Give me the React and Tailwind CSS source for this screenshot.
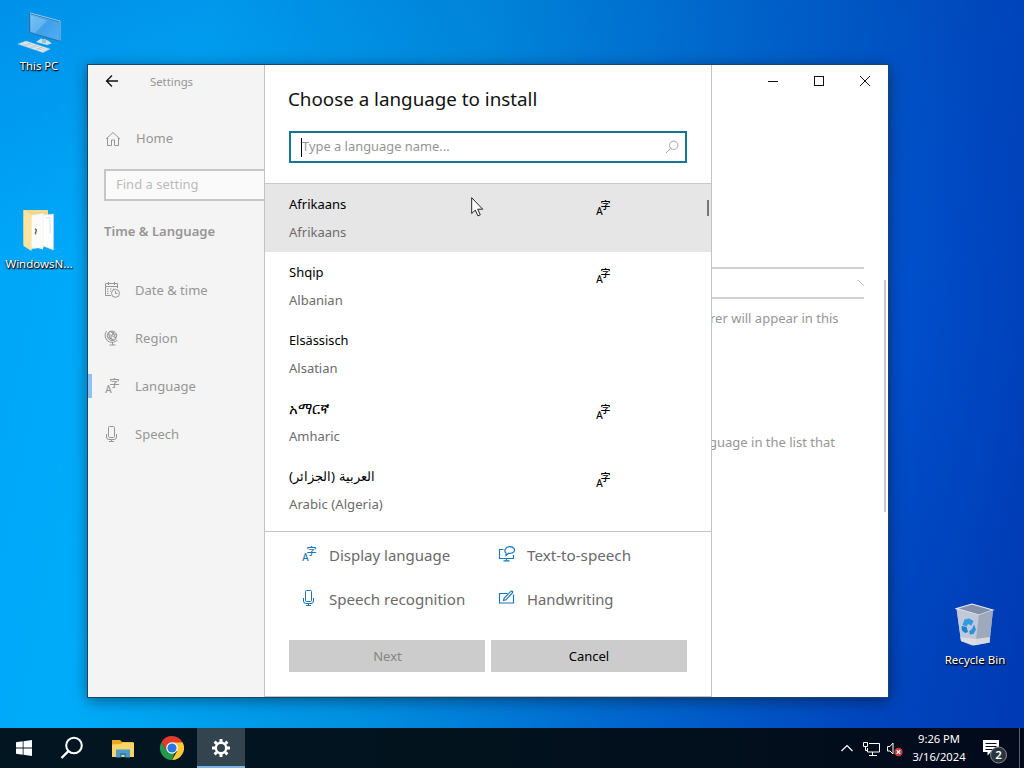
import React from "react";

const languages = [
  { native: "Afrikaans", english: "Afrikaans", display: true, cls: "text-[13px]", sub: "text-[13px]" },
  { native: "Shqip", english: "Albanian", display: true, cls: "text-[13px]", sub: "text-[13px]" },
  { native: "Elsässisch", english: "Alsatian", display: false, cls: "text-[12.800px]", sub: "text-[13px]" },
  { native: "አማርኛ", english: "Amharic", display: true, cls: "text-[14.500px]", sub: "text-[13px]" },
  { native: "العربية (الجزائر)", english: "Arabic (Algeria)", display: true, cls: "text-[13.400px]", sub: "text-[13.200px]" },
];

function LanguageIcon({ className }) {
  return (
    <svg viewBox="0 0 16 16" className={"h-4 w-4 shrink-0 overflow-visible " + className} fill="currentColor">
      <text x="1.2" y="14.8" fontSize="10" fontFamily="Noto Sans" stroke="currentColor" strokeWidth="0.15">A</text>
      <text x="5.400" y="9" fontSize="10" fontFamily="Noto Sans CJK SC" fontWeight="500">字</text>
    </svg>
  );
}

function MicIcon({ className }) {
  return (
    <svg viewBox="0 0 16 18" className={"h-[18px] w-4 shrink-0 " + className} fill="none" stroke="currentColor">
      <rect x="5.500" y="1.500" width="6" height="11" rx="1" />
      <path d="M3.500 9v3q0 2.500 2.500 2.500h5q2.500 0 2.500-2.500V9M8.500 14.500v2M6 16.500h5" />
    </svg>
  );
}

function HomeIcon() {
  return (
    <svg viewBox="0 0 16 16" className="-mt-px h-4 w-4 shrink-0" fill="none" stroke="currentColor">
      <path d="M1 8 8 1.500 15 8M2.500 7v7.500h4V9h3v5.500h4V7" />
    </svg>
  );
}

function CalendarIcon() {
  return (
    <svg viewBox="0 0 16 16" className="-mt-[3px] h-4 w-4 shrink-0" fill="none" stroke="currentColor">
      <path d="M7 13.500H1.500v-12h12V6M1.500 4.500h12M4.500 0v3M10.500 0v3" />
      <path d="M3 7h1.500M6 7h1.500M9 7h1M3 9.200h1.500M6 9.200h1M3 11.400h1.500" />
      <circle cx="11.500" cy="11.300" r="4" />
      <path d="M11.500 9v2.500h2" />
    </svg>
  );
}

function GlobeIcon() {
  return (
    <svg viewBox="0 0 16 16" className="-mt-[3px] h-4 w-4 shrink-0" fill="none" stroke="currentColor">
      <circle cx="8" cy="5.800" r="4.700" />
      <ellipse cx="8" cy="5.800" rx="2.300" ry="4.700" transform="rotate(-35 8 5.800)" />
      <path d="M4 3.300 12 8.300M5.500 9.500 10 1.800M3.300 6.500l6 3.700M6.500 1.500l6 3.800" strokeWidth=".9" />
      <path d="M2.700 1C.800 3.200.600 6.500 2.100 9c2 3.500 6.500 4.800 11.400 1.200M8.500 12v3M5.500 15h6" />
    </svg>
  );
}

function TextToSpeechIcon() {
  return (
    <svg viewBox="0 0 18 16" className="h-4 w-[18px] shrink-0" fill="none" stroke="currentColor" strokeWidth="1.150">
      <path d="M5.500 3.500h-4v9h14V9M8.500 12.500v2.500M5.500 14.900h6" />
      <path d="M8 9.500V7.200C5.500 4.800 7.500.600 11.700.600s6.300 3.600 3.600 5.700c-1.300 1-3.300 1.100-4.600.900z" />
    </svg>
  );
}

function HandwritingIcon() {
  return (
    <svg viewBox="0 0 18 16" className="-mt-px h-4 w-[18px] shrink-0" fill="none" stroke="currentColor" strokeWidth="1.150">
      <path d="M9.500 3.500h-8v9.500h14V4.500" />
      <path d="M5.500 10.500 6.200 8 13 1.200q1.800-.5 1.700 1.300L8 9.800z" />
    </svg>
  );
}

function ThisPcIcon() {
  return (
    <svg viewBox="0 0 44 44" className="h-11 w-11 translate-y-px" aria-hidden="true">
      <defs>
        <linearGradient id="screen" x1="0" y1="0" x2="1" y2="1">
          <stop offset="0" stopColor="#69baf2" />
          <stop offset=".5" stopColor="#3ea0ec" />
          <stop offset="1" stopColor="#52b1f5" />
        </linearGradient>
      </defs>
      <path d="M19 30l11 3 5-1.500-4-3-7-2z" fill="#cfe0ec" />
      <path d="M25 27h4v4h-4z" fill="#a4bfd0" />
      <path d="M12.500 1.500 42.500 9.500V29L12.500 20.500z" fill="url(#screen)" stroke="#2f6a98" strokeWidth=".9" />
      <path d="M13 .900 43 9v19.500" fill="none" stroke="#b9d9ed" strokeWidth=".8" />
      <path d="M14 3.500 30 8.500 18 21l-4-1z" fill="#9bd2f7" opacity=".35" />
      <path d="M1 32 9 29l24 8-7 3.500z" fill="#e5edf2" stroke="#a6c4d6" strokeWidth=".5" />
      <path d="M5 31.500 28 39M8 30.500l23 7.500M7 34l7-3M13 36l7-3M19 38l7-3" stroke="#9cb2bf" strokeWidth=".5" />
    </svg>
  );
}

function FolderIcon() {
  return (
    <svg viewBox="0 0 34 44" className="h-11 w-[34px]" aria-hidden="true">
      <path d="M1.500 1H26v36H9l-7.500-2z" fill="#f4d785" />
      <path d="M9 6 22 4v34l-13 2z" fill="#f6f6f4" stroke="#d7d7d7" strokeWidth=".5" />
      <path d="M21 6 31.500 5v36L21 37z" fill="#fff" stroke="#dadada" strokeWidth=".5" />
      <path d="M9.500 8 21 5.500v35L9.500 37z" fill="#fbfbfa" />
      <path d="M24 9l4-.5v16" fill="none" stroke="#d8dde1" />
      <path d="M1.500 1 9.500 6v36l-8-5z" fill="#fbe3a0" />
      <path d="M13 20q2 .5 1 2.500t0 2.500" fill="none" stroke="#666" strokeWidth="1.500" />
    </svg>
  );
}

function RecycleIcon() {
  return (
    <svg viewBox="0 0 40 44" className="h-11 w-10" aria-hidden="true">
      <path d="M1.500 6.500 17 2l21 6-3.500 32.500L17 43.500 6 39z" fill="#b5bfd1" />
      <path d="M1.500 6.500 17 2l21 6-14 5z" fill="#8490a8" stroke="#e6edf4" strokeWidth="1.100" />
      <path d="M1.500 7 24 13l-3.500 30L6 39z" fill="#bfc9da" />
      <path d="M24 13 38 8l-3.500 32.500L20.500 43z" fill="#9ea9bd" />
      <path d="M5.500 35 20 37l15-2-.5 5.500L19 43.500 6 39z" fill="#e4e4e6" opacity=".8" />
      <path d="M9.500 17.500 14 16.500 18.500 19l-2 4.500-3.500-1.500-1.500 2.500-4-1.500z" fill="#2f9be0" />
      <path d="M6.500 24l5 1 1.500 5-3 1-3-2.500z" fill="#1a83cf" />
      <path d="M19 22.500l2 5-2.500 4.500-3.500.5-1-3 3-2.500z" fill="#2a93dc" />
    </svg>
  );
}

function DesktopItem({ place, icon, label, width }) {
  return (
    <div className={"absolute flex flex-col items-center " + place}>
      {icon}
      <span className={"mt-[3px] whitespace-nowrap text-center leading-4 text-white [text-shadow:0_1px_2px_#000,1px_1px_1px_#000] " + width}>{label}</span>
    </div>
  );
}

function NavItem({ icon, label, active }) {
  return (
    <div className="relative flex h-12 items-center pl-4 text-[#969696]">
      {active && <span className="absolute left-0 top-[11px] h-6 w-[4px] bg-[#8dc0f3]" />}
      {icon}
      <span className="ml-[15px] text-[13px]">{label}</span>
    </div>
  );
}

function Sidebar() {
  return (
    <aside className="flex w-[176px] shrink-0 flex-col bg-[#f4f4f4]">
      <div className="flex h-[33px] items-center pl-[17px]">
        <svg viewBox="0 0 14 14" className="-mt-[2px] h-[14px] w-[14px]" fill="none" stroke="#111" strokeWidth="1.300">
          <path d="M13 7H1.500M7 1.500 1.500 7 7 12.500" />
        </svg>
        <span className="ml-[31px] pt-[2px] text-[11.300px] text-[#969696]">Settings</span>
      </div>
      <div className="mt-[17px] flex h-12 items-center pl-[17px] text-[#969696]">
        <HomeIcon />
        <span className="ml-[15px] text-[13px]">Home</span>
      </div>
      <div className="ml-4 mt-[6px] flex h-8 items-center border-2 border-r-0 border-[#c6c6c6] bg-[#fafafa] pl-[10px] text-[13px] text-[#bcbcbc]">
        Find a setting
      </div>
      <h2 className="ml-4 mt-5 h-5 text-[13.100px] font-semibold leading-5 text-[#969696]">Time &amp; Language</h2>
      <nav className="mt-[26px]">
        <NavItem icon={<CalendarIcon />} label="Date & time" />
        <NavItem icon={<GlobeIcon />} label="Region" />
        <NavItem icon={<LanguageIcon className="-mt-[3px]" />} label="Language" active />
        <NavItem icon={<MicIcon className="-ml-px -mt-[3px] mr-px" />} label="Speech" />
      </nav>
    </aside>
  );
}

function Dialog() {
  return (
    <section className="flex w-[448px] shrink-0 flex-col border border-t-0 border-[#c3c3c3] bg-white">
      <h1 className="ml-[23px] mt-5 h-7 whitespace-nowrap text-[18.800px] leading-7 text-[#111]">Choose a language to install</h1>
      <div className="ml-6 mt-[18px] flex h-8 w-[398px] shrink-0 items-center border-2 border-[#147794] pl-[10px] pr-[6px]">
        <span className="h-[19px] w-px bg-black" />
        <span className="grow text-[12.900px] text-[#969696]">Type a language name...</span>
        <svg viewBox="0 0 14 14" className="h-[14px] w-[14px]" fill="none" stroke="#a5a5a5">
          <circle cx="8.700" cy="5.300" r="4.200" />
          <path d="M5.600 8.400 1 13" />
        </svg>
      </div>
      <div className="relative mt-5 h-[348px] shrink-0 overflow-hidden border-t border-[#c9c9c9]">
        {languages.map((l, i) => (
          <div key={l.english} className={"flex h-[68px] pl-6 pt-[10px] " + (i === 0 ? "bg-[#e6e6e6]" : "")}>
            <div className="flex w-[306px] flex-col items-start gap-2">
              <span className={"h-5 whitespace-nowrap leading-5 text-black " + l.cls}>{l.native}</span>
              <span className={"h-5 whitespace-nowrap leading-5 text-[#6c6c6c] " + l.sub}>{l.english}</span>
            </div>
            {l.display && <LanguageIcon className="mt-[6px] text-black" />}
          </div>
        ))}
        <span className="absolute right-[2px] top-4 h-4 w-[2px] bg-[#777]" />
      </div>
      <div className="grid shrink-0 grid-cols-[197px_1fr] border-t border-[#c3c3c3] pl-9 text-[15px] text-[#6a6a6a]">
        <div className="flex h-11 items-center gap-3 text-[#1976b8]"><LanguageIcon className="-mt-px" /><span className="pt-[2px] text-[#6a6a6a]">Display language</span></div>
        <div className="flex h-11 items-center gap-[11px] text-[#1976b8]"><TextToSpeechIcon /><span className="pt-[2px] text-[15.200px] text-[#6a6a6a]">Text-to-speech</span></div>
        <div className="flex h-11 items-center gap-3 text-[#1976b8]"><MicIcon className="-ml-px mr-px" /><span className="pt-[2px] text-[15.100px] text-[#6a6a6a]">Speech recognition</span></div>
        <div className="flex h-11 items-center gap-[11px] text-[#1976b8]"><HandwritingIcon /><span className="pt-[2px] text-[14.800px] text-[#6a6a6a]">Handwriting</span></div>
      </div>
      <div className="ml-6 mt-5 flex gap-[6px] text-[13px]">
        <button className="h-8 w-[196px] bg-[#ccc] pl-px pt-px text-[#858585]">Next</button>
        <button className="h-8 w-[196px] bg-[#ccc] pt-px text-black">Cancel</button>
      </div>
    </section>
  );
}

function MainPane() {
  return (
    <main className="flex min-w-0 grow flex-col overflow-hidden bg-white">
      <div className="ml-[38px] flex h-[31px] items-end">
        <svg viewBox="0 0 138 30" className="h-[30px] w-[138px]" fill="none" stroke="#111">
          <path d="M18 15.500h10" />
          <rect x="64.500" y="10.500" width="9" height="9" />
          <path d="m110 10 10 10M120 10l-10 10" />
        </svg>
      </div>
      <div className="flex">
        <div className="w-[152px] pt-[171px]">
          <div className="flex h-8 items-center justify-end border-y-2 border-[#d2d2d2]">
            <svg viewBox="0 0 6 6" className="h-[6px] w-[6px]" fill="none" stroke="#bbb"><path d="m0 0 6 6" /></svg>
          </div>
          <p className="-ml-[2px] mt-[9px] h-5 whitespace-nowrap text-[13px] leading-5 text-[#969696]">rer will appear in this</p>
          <p className="-ml-[3px] mt-[104px] h-5 whitespace-nowrap text-[13px] leading-5 text-[#969696]">guage in the list that</p>
        </div>
        <span className="ml-5 mt-[184px] h-[232px] w-[2px] bg-[#c9c9c9]" />
      </div>
    </main>
  );
}

function Taskbar() {
  return (
    <footer className="flex h-10 items-center bg-[linear-gradient(90deg,#021621,#02131e_45%,#020a1b)] text-white">
      <div className="flex h-10 w-12 items-center justify-center">
        <svg viewBox="0 0 16 16" className="h-4 w-4" fill="#fff"><path d="M0 2.300 6.700 1.300v6.200H0zM7.500 1.200 16 0v7.500H7.500zM0 8.400h6.700v6.300L0 13.700zM7.500 8.400H16V16l-8.500-1.200z" /></svg>
      </div>
      <div className="flex h-10 w-12 items-center justify-center">
        <svg viewBox="0 0 24 24" className="h-6 w-6" fill="none" stroke="#fff" strokeWidth="2"><circle cx="14" cy="9.500" r="7.800" /><path d="M8.500 15 1.500 22" strokeWidth="2.400" /></svg>
      </div>
      <div className="flex h-10 w-[53px] items-center justify-center">
        <svg viewBox="0 0 22 19" className="h-[19px] w-[22px]">
          <path d="M0 1h8l2 2h11v3H0z" fill="#e9a91c" />
          <path d="M0 5.500 9 5l1.500-1.500H22V18H0z" fill="#fbd56a" />
          <path d="M4 10.500h14v8h-4V14H8v4.500H4z" fill="#4b9cc9" />
          <path d="M8 14h6v4.500h-1.500V16h-3v2.500H8z" fill="#2f7fae" />
        </svg>
      </div>
      <div className="flex h-10 w-12 items-center justify-center">
        <svg viewBox="0 0 24 24" className="-ml-[2px] h-6 w-6">
          <path d="M22.400 6A12 12 0 0 1 12 24l5.200-9L12 6z" fill="#fcc934" />
          <path d="M12 24A12 12 0 0 1 1.600 6l5.200 9 8 1.500z" fill="#219a4b" />
          <path d="M12 6.500h10.600A12 12 0 0 0 1.600 6l5.200 9z" fill="#e33b2e" />
          <circle cx="12" cy="12" r="5.800" fill="#fff" />
          <circle cx="12" cy="12" r="4.600" fill="#2b76e5" />
        </svg>
      </div>
      <div className="flex h-10 w-12 items-center justify-center border-b-2 border-[#76b5e6] bg-[#33444e]">
        <svg viewBox="-10 -10 20 20" className="mt-px h-5 w-5" fill="none" stroke="#fff">
          <circle r="5.200" strokeWidth="2.400" />
          <path d="M0-6v-3M0 6v3M-6 0h-3M6 0h3M4.300-4.300l2.100-2.100M4.300 4.300l2.100 2.100M-4.300-4.300l-2.100-2.100M-4.300 4.300l-2.100 2.100" strokeWidth="3" />
        </svg>
      </div>
      <div className="ml-auto flex h-10 items-center">
        <svg viewBox="0 0 12 8" className="h-2 w-3" fill="none" stroke="#fff" strokeWidth="1.200"><path d="M.5 7 6 1.500 11.500 7" /></svg>
        <svg viewBox="0 0 17 14" className="ml-[10px] mt-px h-[14px] w-[17px]" fill="none" stroke="#fff">
          <path d="M6 1.500h10.500v8.500H4.500V6M9.500 10v3M6 13.500h8" />
          <path d="M.5.5h4v4h-4zM2.500 4.500v4h2" />
        </svg>
        <svg viewBox="0 0 16 16" className="ml-[7px] mt-px h-4 w-4" fill="none" stroke="#fff">
          <path d="M.5 5.500h2.500L6 2v11L3 10H.5z" />
          <circle cx="11.500" cy="11" r="4.200" fill="#c73a41" stroke="none" />
          <path d="m9.700 9.200 3.600 3.600M13.300 9.200l-3.600 3.600" strokeWidth="1.200" />
        </svg>
        <div className="ml-[3px] flex w-[66px] flex-col items-center whitespace-nowrap text-[11.200px] leading-[18px]">
          <span>9:26 PM</span>
          <span>3/16/2024</span>
        </div>
        <svg viewBox="0 0 26 26" className="ml-[10px] mt-2 h-[26px] w-[26px]">
          <path d="M1 1h16v12H9l-3.500 3.500V13H1z" fill="#fff" />
          <path d="M3.500 4.500h11M3.500 7.500h11M3.500 10.500h8" stroke="#06101d" strokeWidth="1.200" />
          <circle cx="16.500" cy="16" r="8" fill="#2b343c" stroke="#858b90" />
          <text x="16.500" y="20" textAnchor="middle" fontSize="11.500" fontWeight="600" fontFamily="Noto Sans" fill="#fff">2</text>
        </svg>
        <span className="ml-[11px] mr-1 h-10 w-px bg-[#59616c]" />
      </div>
    </footer>
  );
}

export default function App() {
  return (
    <div className="flex h-[768px] w-[1024px] flex-col overflow-hidden font-['Noto_Sans','Noto_Sans_CJK_SC',sans-serif]">
      <div className="relative h-[728px] bg-[radial-gradient(ellipse_130px_330px_at_900px_330px,rgba(0,84,220,0.4),transparent),linear-gradient(180deg,rgba(0,60,170,0.18),transparent_35%),linear-gradient(102deg,#00a4f8_0%,#00acfa_18%,#0092e2_42%,#0068cf_65%,#0046be_86%,#003ab4_100%)]">
        <DesktopItem place="left-0 top-[11px] w-[78px]" icon={<ThisPcIcon />} label="This PC" width="text-[11.300px]" />
        <DesktopItem place="left-0 top-[209px] w-[78px]" icon={<FolderIcon />} label="WindowsN..." width="text-[11.500px]" />
        <DesktopItem place="left-[936px] top-[602px] w-[78px]" icon={<RecycleIcon />} label="Recycle Bin" width="pt-[3px] text-[11.500px]" />
        <div className="absolute left-[87px] top-[64px] flex h-[634px] w-[802px] border border-[#17456b] bg-white shadow-[0_3px_14px_rgba(0,0,0,0.42)]">
          <Sidebar />
          <Dialog />
          <MainPane />
        </div>
        <svg viewBox="0 0 13 20" className="absolute left-[471px] top-[197px] h-5 w-[13px]">
          <path d="M.700.700v15.800l3.600-3.400 2.600 5.800 2.400-1-2.600-5.700h5z" fill="#fff" stroke="#222" />
        </svg>
      </div>
      <Taskbar />
    </div>
  );
}
